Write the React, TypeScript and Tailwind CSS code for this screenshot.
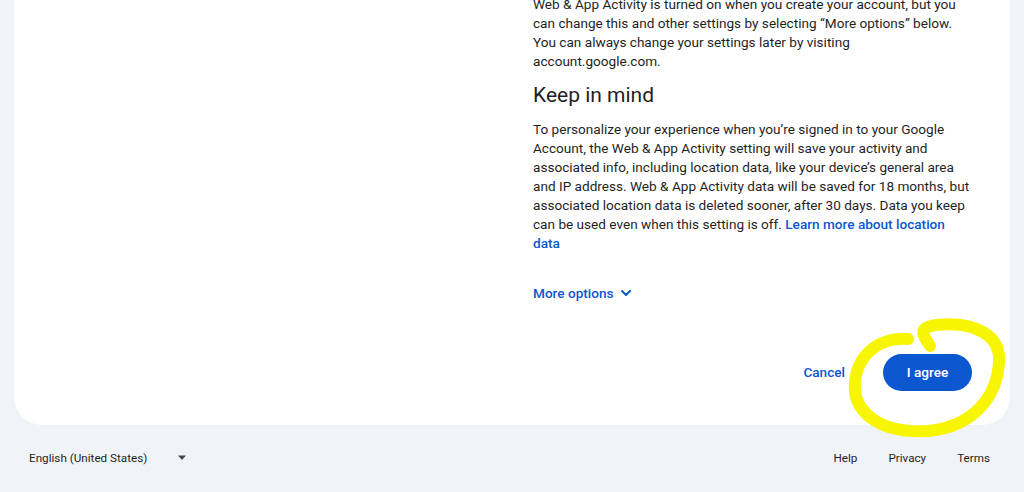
export default function App() {
  return (
    <div className="relative flex h-[492px] w-[1024px] flex-col overflow-hidden bg-[#f0f4f9] font-['Roboto',sans-serif] text-[#1f1f1f]">
      <div className="mx-[14px] flex rounded-b-[28px] bg-white pb-[34px]">
        <div className="w-[519px] shrink-0" />
        <div className="w-[442px] text-[13.6px] leading-[19px]">
          <p className="-mt-[5px]">
            Web &amp; App Activity is turned on when you create your account, but you can change this and other
            settings by selecting “More options” below. You can always change your settings later by visiting
            account.google.com.
          </p>
          <h2 className="mt-[10px] text-[21px] leading-[28px] text-[#1f1f1f]">Keep in mind</h2>
          <p className="mt-[11px]">
            To personalize your experience when you’re signed in to your Google Account, the Web &amp; App Activity
            setting will save your activity and associated info, including location data, like your device’s general
            area and IP address. Web &amp; App Activity data will be saved for 18 months, but associated location data
            is deleted sooner, after 30 days. Data you keep can be used even when this setting is off.{' '}
            <a className="font-medium text-[#0b57d0]">Learn more about location data</a>
          </p>
          <button className="mt-[30px] flex items-center gap-1 text-[13.6px] font-medium leading-[20px] text-[#0b57d0]">
            More options
            <svg width="16" height="16" viewBox="0 0 24 24" fill="none" stroke="currentColor" strokeWidth="3" strokeLinecap="round" strokeLinejoin="round">
              <path d="M6 9l6 6 6-6" />
            </svg>
          </button>
          <div className="mt-[51px] flex items-center justify-end gap-[38px] pr-[3px]">
            <button className="text-[13.6px] font-medium text-[#0b57d0]">Cancel</button>
            <button className="h-[37px] w-[89px] rounded-full bg-[#0b57d0] text-[13.6px] font-medium text-white">I agree</button>
          </div>
        </div>
      </div>
      <div className="mt-[23px] flex items-center px-[29px] text-[11.7px] leading-[20px]">
        <div className="flex items-center">
          <span>English (United States)</span>
          <svg className="ml-[30px]" width="10" height="6" viewBox="0 0 10 6" fill="#444746">
            <path d="M1 0.5h8L5 5z" />
          </svg>
        </div>
        <div className="ml-auto flex gap-[31px] pr-[5px]">
          <a>Help</a>
          <a>Privacy</a>
          <a>Terms</a>
        </div>
      </div>
      <svg className="pointer-events-none absolute left-0 top-0" width="1024" height="492" viewBox="0 0 1024 492" fill="none">
        <path
          d="M930 346 C 924 336, 916 328, 936 325 C 976 321, 1001 336, 999 362 C 997 398, 972 427, 928 431 C 880 434, 852 412, 855 382 C 858 352, 882 337, 908 339"
          stroke="#f8f500"
          strokeWidth="12"
          strokeLinecap="round"
          strokeLinejoin="round"
        />
      </svg>
    </div>
  );
}
